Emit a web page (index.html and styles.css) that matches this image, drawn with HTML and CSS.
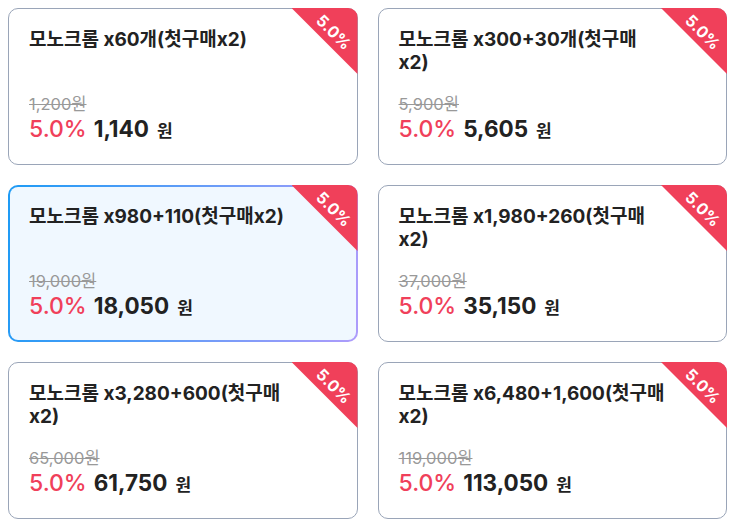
FILE: index.html
```html
<!DOCTYPE html>
<html lang="ko">
<head>
<meta charset="utf-8">
<link rel="stylesheet" href="styles.css">
</head>
<body>
<div class="grid">
  <div class="card">
    <div class="badge"><span>5.0%</span></div>
    <div class="title">모노크롬 x60개(첫구매x2)</div>
    <div class="prices">
      <div class="orig">1,200원</div>
      <div class="price"><span class="rate">5.0%</span><span class="amount">1,140</span><span class="won">원</span></div>
    </div>
  </div>
  <div class="card">
    <div class="badge"><span>5.0%</span></div>
    <div class="title">모노크롬 x300+30개(첫구매x2)</div>
    <div class="prices">
      <div class="orig">5,900원</div>
      <div class="price"><span class="rate">5.0%</span><span class="amount">5,605</span><span class="won">원</span></div>
    </div>
  </div>
  <div class="card selected">
    <div class="badge"><span>5.0%</span></div>
    <div class="title">모노크롬 x980+110(첫구매x2)</div>
    <div class="prices">
      <div class="orig">19,000원</div>
      <div class="price"><span class="rate">5.0%</span><span class="amount">18,050</span><span class="won">원</span></div>
    </div>
  </div>
  <div class="card">
    <div class="badge"><span>5.0%</span></div>
    <div class="title">모노크롬 x1,980+260(첫구매x2)</div>
    <div class="prices">
      <div class="orig">37,000원</div>
      <div class="price"><span class="rate">5.0%</span><span class="amount">35,150</span><span class="won">원</span></div>
    </div>
  </div>
  <div class="card">
    <div class="badge"><span>5.0%</span></div>
    <div class="title">모노크롬 x3,280+600(첫구매x2)</div>
    <div class="prices">
      <div class="orig">65,000원</div>
      <div class="price"><span class="rate">5.0%</span><span class="amount">61,750</span><span class="won">원</span></div>
    </div>
  </div>
  <div class="card">
    <div class="badge"><span>5.0%</span></div>
    <div class="title">모노크롬 x6,480+1,600(첫구매x2)</div>
    <div class="prices">
      <div class="orig">119,000원</div>
      <div class="price"><span class="rate">5.0%</span><span class="amount">113,050</span><span class="won">원</span></div>
    </div>
  </div>
</div>
</body>
</html>
```
FILE: styles.css
```css
html, body {
  margin: 0;
  padding: 0;
  background: #ffffff;
}
body {
  font-family: Inter, "Noto Sans CJK KR", sans-serif;
  color: #222222;
}
.grid {
  display: grid;
  grid-template-columns: 1fr 1fr;
  grid-auto-rows: 157px;
  column-gap: 20px;
  row-gap: 20px;
  padding: 8px;
}
.card {
  position: relative;
  display: flex;
  flex-direction: column;
  box-sizing: border-box;
  border: 1px solid #9aa5b8;
  border-radius: 10px;
  background: #ffffff;
  padding: 19px 60px 19px 20px;
}
.card.selected {
  border: 2px solid transparent;
  padding: 18px 59px 18px 19px;
  background:
    linear-gradient(#f0f8ff, #f0f8ff) padding-box,
    linear-gradient(100deg, #1d9bf5 0%, #5c9cf7 45%, #ae9cfb 100%) border-box;
}
.badge {
  position: absolute;
  top: -1px;
  right: -1px;
  width: 66px;
  height: 66px;
  background: #f0405a;
  border-top-right-radius: 10px;
  clip-path: polygon(0 0, 100% 0, 100% 100%);
}
.selected .badge {
  top: -2px;
  right: -2px;
}
.badge span {
  position: absolute;
  left: calc(100% - 24px);
  top: 24px;
  transform: translate(-50%, -50%) rotate(45deg);
  color: #ffffff;
  font-weight: 700;
  font-size: 16px;
  line-height: 18px;
  white-space: nowrap;
}
.title {
  font-size: 19px;
  font-weight: 700;
  line-height: 23px;
  min-height: 46px;
  color: #222222;
}
.prices {
  margin-top: auto;
}
.orig {
  font-size: 16.5px;
  line-height: 22px;
  color: #999999;
  text-decoration: line-through;
}
.price {
  line-height: 28px;
  white-space: nowrap;
}
.rate {
  font-size: 23px;
  font-weight: 500;
  color: #f0405a;
  margin-right: 7px;
}
.amount {
  font-size: 22.5px;
  font-weight: 700;
  color: #222222;
  margin-right: 8px;
}
.won {
  font-size: 17px;
  font-weight: 700;
  color: #222222;
}
```
